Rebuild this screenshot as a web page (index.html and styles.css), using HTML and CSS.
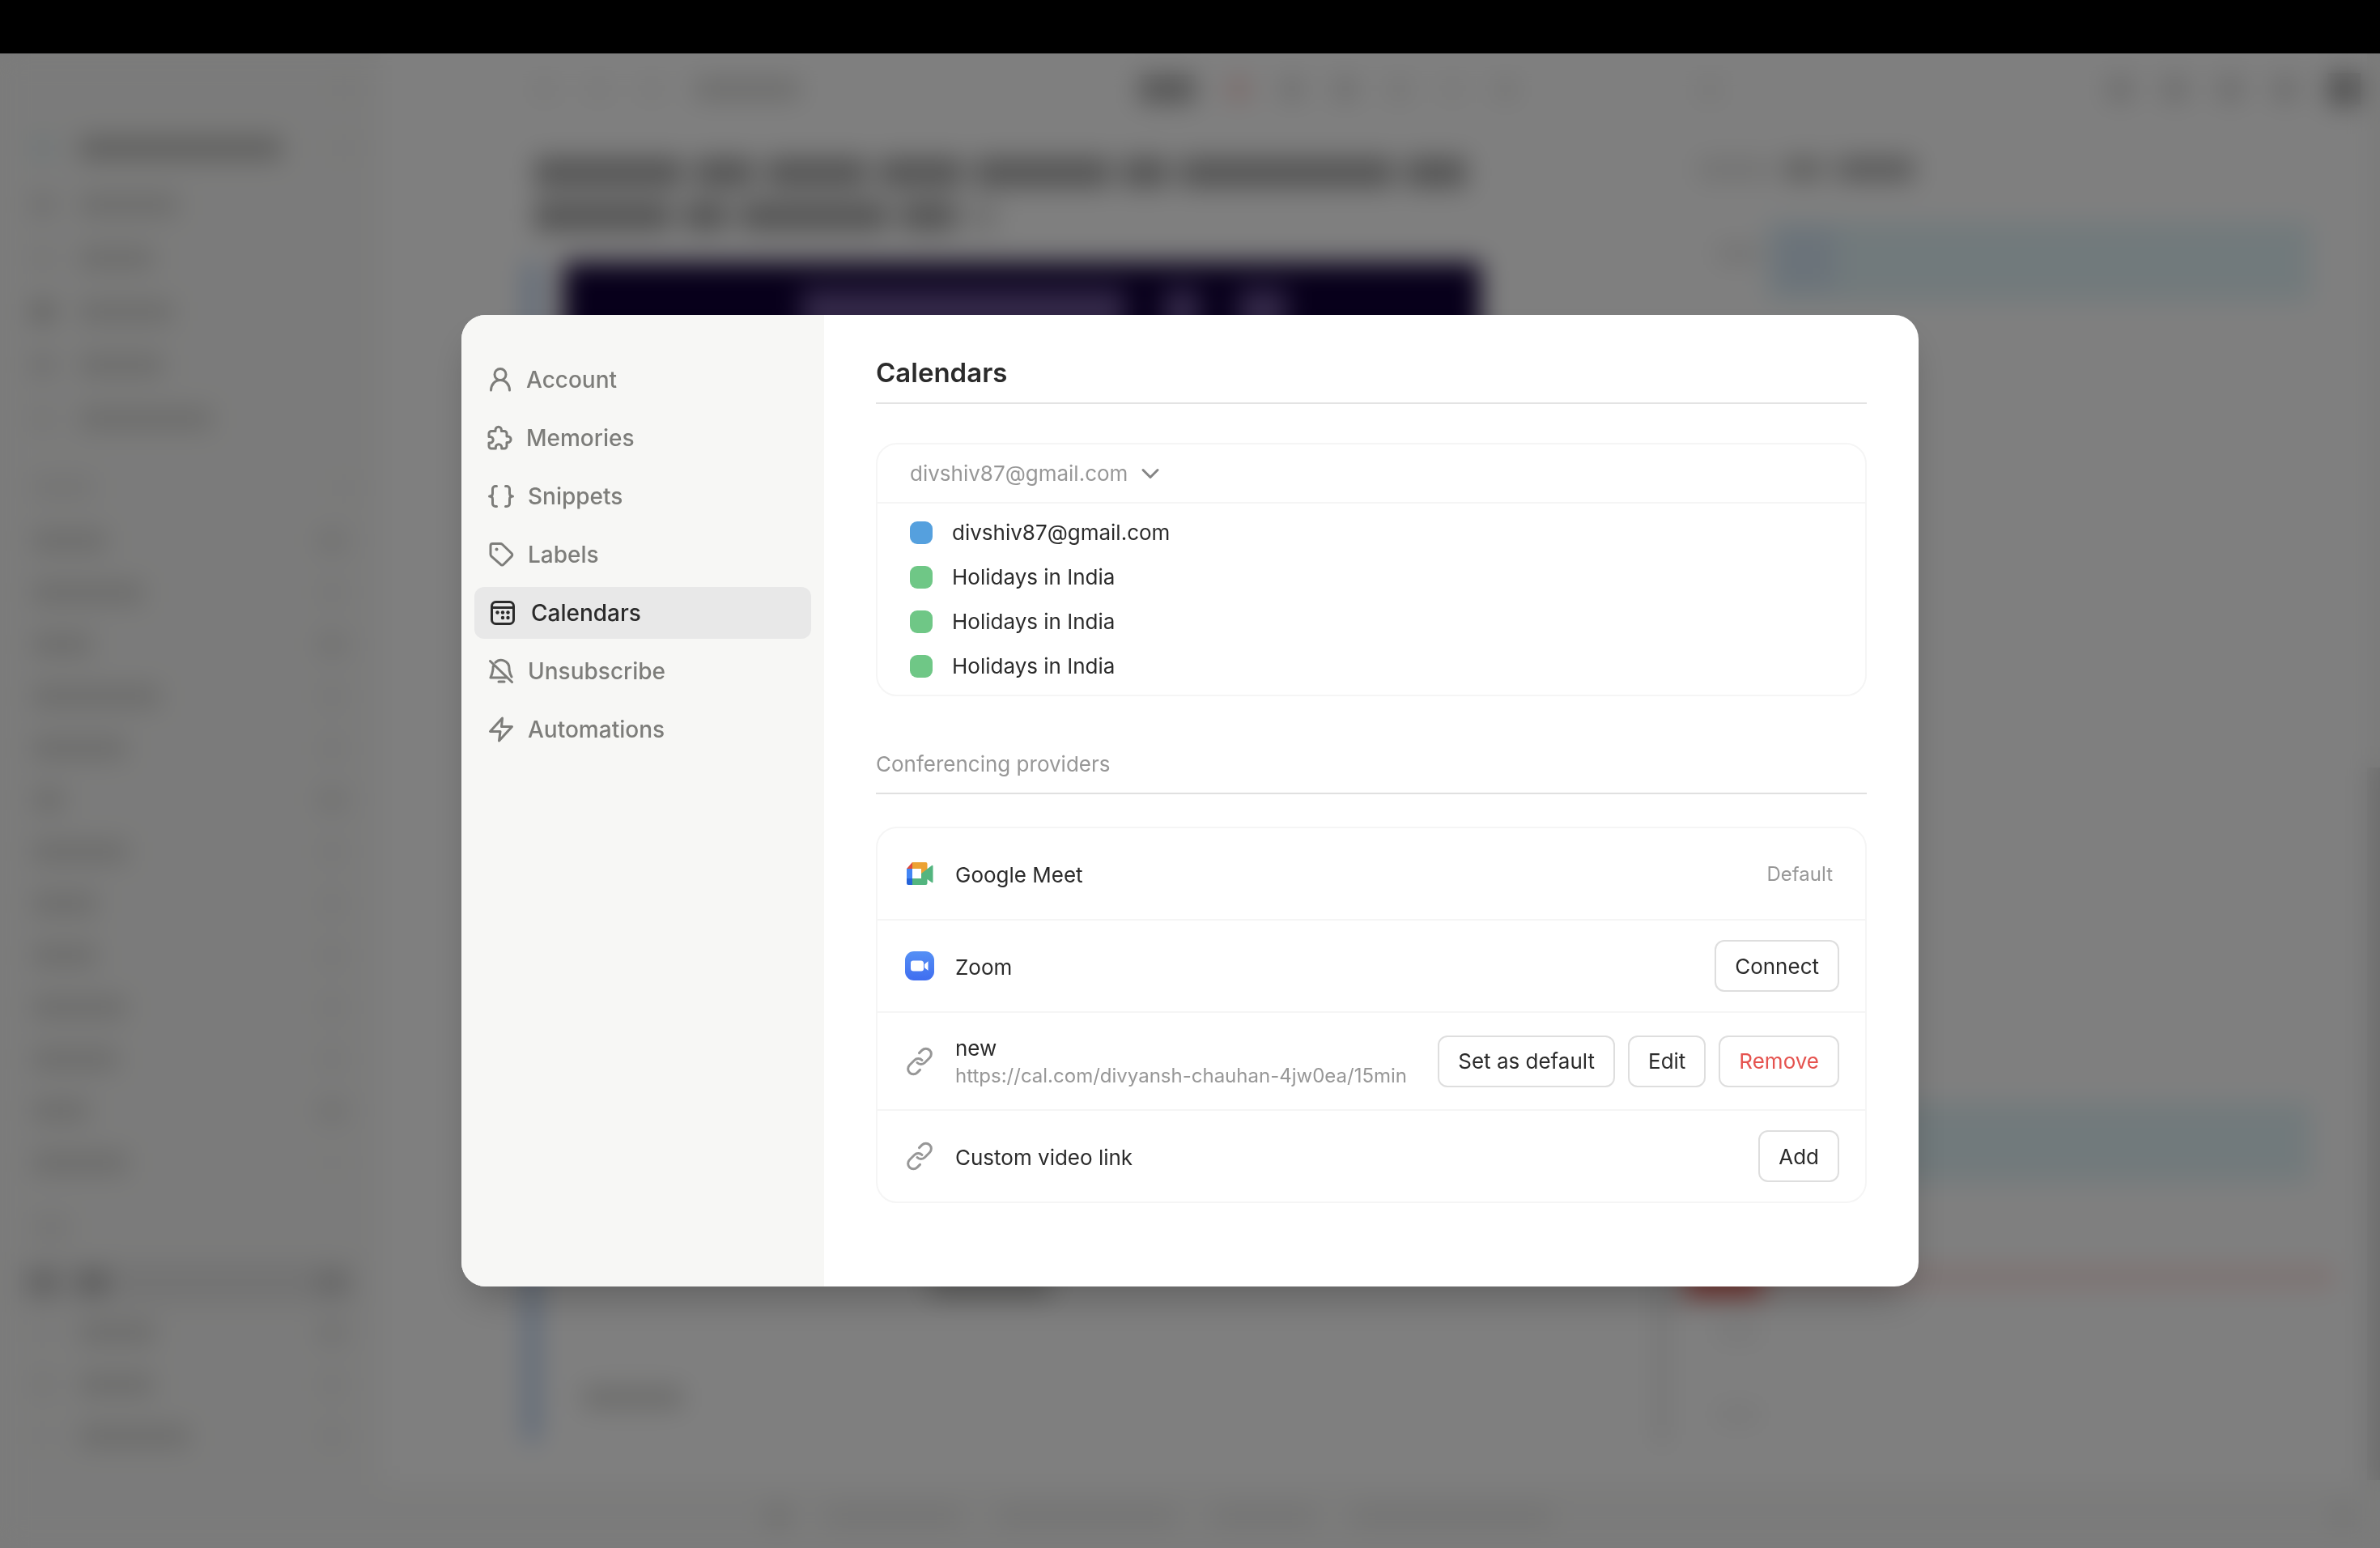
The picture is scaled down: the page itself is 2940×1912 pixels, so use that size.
FILE: index.html
```html
<!DOCTYPE html>
<html lang="en">
<head>
<meta charset="utf-8">
<meta name="viewport" content="width=device-width, initial-scale=1">
<title>Settings – Calendars</title>
<link rel="stylesheet" href="styles.css">
</head>
<body>
<div class="notch-bar"></div>
<div class="window">

  <!-- Mail app behind the dialog -->
  <div class="app" aria-hidden="true">
    <div class="rail">
      <div class="rail-top"><i class="dot ghost"></i></div>
      <div class="rail-row who"><i class="dot tint"></i><i class="bar strong" style="width:250px"></i><i class="dot ghost end"></i></div>
      <div class="rail-row"><i class="dot"></i><i class="bar" style="width:122px"></i></div>
      <div class="rail-row"><i class="dot faint"></i><i class="bar" style="width:92px"></i></div>
      <div class="rail-row"><i class="dot strong"></i><i class="bar" style="width:116px"></i></div>
      <div class="rail-row"><i class="dot"></i><i class="bar" style="width:104px"></i></div>
      <div class="rail-row"><i class="dot faint"></i><i class="bar" style="width:164px"></i></div>
      <div class="rail-head"><i class="bar faint" style="width:76px"></i><i class="dot ghost end"></i></div>
      <div class="rail-label"><i class="bar" style="width:92px"></i><i class="count two"></i></div>
      <div class="rail-label"><i class="bar" style="width:138px"></i><i class="count"></i></div>
      <div class="rail-label"><i class="bar" style="width:74px"></i><i class="count two"></i></div>
      <div class="rail-label"><i class="bar" style="width:158px"></i><i class="count"></i></div>
      <div class="rail-label"><i class="bar" style="width:116px"></i><i class="count"></i></div>
      <div class="rail-label"><i class="bar" style="width:40px"></i><i class="count two"></i></div>
      <div class="rail-label"><i class="bar" style="width:118px"></i><i class="count"></i></div>
      <div class="rail-label"><i class="bar" style="width:80px"></i><i class="count"></i></div>
      <div class="rail-label"><i class="bar" style="width:80px"></i><i class="count"></i></div>
      <div class="rail-label"><i class="bar" style="width:116px"></i><i class="count"></i></div>
      <div class="rail-label"><i class="bar" style="width:106px"></i><i class="count"></i></div>
      <div class="rail-label"><i class="bar" style="width:70px"></i><i class="count two"></i></div>
      <div class="rail-label"><i class="bar" style="width:118px"></i><i class="count faint"></i></div>
      <div class="rail-head low"><i class="bar faint" style="width:46px"></i></div>
      <div class="rail-label picked"><i class="dot strong"></i><i class="bar strong" style="width:34px"></i><i class="count two"></i></div>
      <div class="rail-label"><i class="dot ghost"></i><i class="bar" style="width:94px"></i><i class="count two"></i></div>
      <div class="rail-label"><i class="dot faint"></i><i class="bar" style="width:92px"></i><i class="count"></i></div>
      <div class="rail-label"><i class="dot ghost"></i><i class="bar" style="width:136px"></i><i class="count"></i></div>
    </div>
    <div class="desk">
      <div class="sheet">
        <div class="mail">
          <div class="mail-tools">
            <i class="dot ghost"></i><i class="dot ghost"></i><i class="dot ghost"></i><i class="bar" style="width:130px"></i>
            <i class="reply"></i><i class="dot red"></i><i class="dot"></i><i class="dot"></i><i class="dot faint"></i><i class="dot ghost"></i><i class="dot faint"></i>
          </div>
          <div class="subject">
            <i style="width:184px"></i><i style="width:74px"></i><i style="width:126px"></i><i style="width:104px"></i><i style="width:168px"></i><i style="width:58px"></i><i style="width:264px"></i><i style="width:76px"></i>
          </div>
          <div class="subject">
            <i style="width:170px"></i><i style="width:56px"></i><i style="width:184px"></i><i style="width:70px"></i><i class="emoji" style="width:36px"></i>
          </div>
          <div class="letter">
            <div class="banner"><i style="width:400px"></i><i style="width:44px"></i><i style="width:60px"></i></div>
            <div class="letter-foot"><i class="bar strong" style="width:150px"></i></div>
            <div class="letter-note"><i class="bar" style="width:124px"></i></div>
          </div>
        </div>
        <div class="agenda">
          <div class="agenda-tools"><i class="dot ghost lead"></i><i class="dot"></i><i class="dot"></i><i class="dot"></i><i class="dot"></i><i class="avatar"></i></div>
          <div class="agenda-head"><i class="bar faint" style="width:90px"></i><i class="bar strong" style="width:50px"></i><i class="bar month" style="width:96px"></i></div>
          <div class="agenda-event first"><i></i></div>
          <div class="agenda-event second"></div>
          <div class="agenda-now"></div>
          <div class="agenda-hour morning"></div>
          <div class="agenda-hour evening"></div>
          <div class="agenda-hour night"></div>
        </div>
      </div>
      <div class="hints"><i class="bar" style="width:26px"></i><i class="bar faint" style="width:166px"></i><i class="bar faint" style="width:220px"></i><i class="bar faint" style="width:126px"></i><i class="bar faint" style="width:246px"></i><i class="dot faint end"></i></div>
    </div>
    <div class="scrollbar"></div>
  </div>

  <div class="overlay">
    <section class="dialog" role="dialog" aria-modal="true" aria-labelledby="page-title">
      <nav class="menu" aria-label="Settings">
        <a class="menu-item" href="#account">
          <svg class="icon s" viewBox="0 0 32 32"><circle cx="16" cy="9.500" r="7"/><path d="M4.500 29c0-7 5-12.500 11.500-12.500S27.500 22 27.500 29"/></svg>Account</a>
        <a class="menu-item" href="#memories">
          <svg class="icon s" viewBox="0 0 32 32"><path d="M10 7.500V6a3.700 3.700 0 0 1 7.400 0v1.500H21a3 3 0 0 1 3 3V14h1.400a3.700 3.700 0 0 1 0 7.400H24V26a3 3 0 0 1-3 3h-3.300v-1.600a3.700 3.700 0 0 0-7.400 0V29H5a3 3 0 0 1-3-3v-4h1.500a3.700 3.700 0 0 0 0-7.400H2v-4.100a3 3 0 0 1 3-3z"/></svg>Memories</a>
        <a class="menu-item" href="#snippets">
          <svg class="icon m" viewBox="0 0 34 34"><path d="M11.500 4.500H10a3.500 3.500 0 0 0-3.500 3.500v5.500c0 2-1.500 3.500-4 3.500 2.500 0 4 1.500 4 3.500V26a3.500 3.500 0 0 0 3.500 3.500h1.500M22.500 4.500H24a3.500 3.500 0 0 1 3.500 3.500v5.500c0 2 1.500 3.500 4 3.500-2.500 0-4 1.500-4 3.500V26a3.500 3.500 0 0 1-3.500 3.500h-1.500"/></svg>Snippets</a>
        <a class="menu-item" href="#labels">
          <svg class="icon m" viewBox="0 0 34 34"><path d="M4 6a2.500 2.500 0 0 1 2.500-2.500H16a4 4 0 0 1 2.600 1L30 15.500a2.500 2.500 0 0 1 0 3.600L20 29.200a2.500 2.500 0 0 1-3.600 0L5 19.200a3.500 3.500 0 0 1-1-2.400z"/><circle class="solid" cx="11.500" cy="10.500" r="2"/></svg>Labels</a>
        <a class="menu-item current" href="#calendars" aria-current="page">
          <svg class="icon l" viewBox="0 0 38 38"><rect x="5.500" y="5.500" width="27" height="27" rx="5"/><path d="M5.500 12.500h27"/><g class="solid"><circle cx="12.500" cy="18.500" r="2.200"/><circle cx="19" cy="18.500" r="2.200"/><circle cx="25.500" cy="18.500" r="2.200"/><circle cx="19" cy="25" r="2.200"/><circle cx="25.500" cy="25" r="2.200"/></g></svg>Calendars</a>
        <a class="menu-item" href="#unsubscribe">
          <svg class="icon m" viewBox="0 0 34 34"><path d="M3.500 4.500l27 26M10 6.200A10 10 0 0 1 27 13c0 6 1.500 8.500 3 11M7.200 11C7 17 6.500 20 4 25h20M14 30h7"/></svg>Unsubscribe</a>
        <a class="menu-item" href="#automations">
          <svg class="icon m" viewBox="0 0 34 34"><path d="M18.500 3L3.500 19.500H16L14.500 31l16-17.500H17.500z"/></svg>Automations</a>
      </nav>

      <main class="panel">
        <h1 class="title" id="page-title">Calendars</h1>

        <div class="card">
          <button class="account" type="button" aria-expanded="true">divshiv87@gmail.com
            <svg class="chevron" viewBox="0 0 24 24"><path d="M3 7.500l9 9 9-9"/></svg>
          </button>
          <ul class="calendars">
            <li><label class="calendar"><input class="swatch blue" type="checkbox" checked>divshiv87@gmail.com</label></li>
            <li><label class="calendar"><input class="swatch" type="checkbox" checked>Holidays in India</label></li>
            <li><label class="calendar"><input class="swatch" type="checkbox" checked>Holidays in India</label></li>
            <li><label class="calendar"><input class="swatch" type="checkbox" checked>Holidays in India</label></li>
          </ul>
        </div>

        <h2 class="subtitle">Conferencing providers</h2>

        <ul class="card providers">
          <li class="provider">
            <svg class="logo" viewBox="0 0 36 36"><path fill="#dc4b3e" d="M9 4v8H2z"/><path fill="#eca233" d="M9 4h16.500a2 2 0 0 1 2 2v7L20 19v-7H9z"/><path fill="#4285f4" d="M2 12h7v12H2z"/><path fill="#2563d9" d="M2 24h7v8H4a2 2 0 0 1-2-2z"/><path fill="#53b57f" d="M9 24h11v-6l13-10q1.500-1 1.500 1v19q0 2-1.500 1l-5.500-4v5a2 2 0 0 1-2 2H9z"/></svg>
            <div class="name">Google Meet</div>
            <span class="badge">Default</span>
          </li>
          <li class="provider">
            <svg class="logo" viewBox="0 0 36 36"><defs><linearGradient id="zoom-fill" x1="0" y1="0" x2="0" y2="1"><stop offset="0" stop-color="#5590f5"/><stop offset="1" stop-color="#3f6df0"/></linearGradient></defs><rect width="36" height="36" rx="11" fill="url(#zoom-fill)"/><path fill="#fff" d="M10 11.500h9.500a3.500 3.500 0 0 1 3.500 3.500v6.500a3 3 0 0 1-3 3h-9.500a3.500 3.500 0 0 1-3.500-3.500v-6.500a3 3 0 0 1 3-3zM24 16l4.500-3.700v11.500L24 20.300z"/></svg>
            <div class="name">Zoom</div>
            <button class="btn" type="button">Connect</button>
          </li>
          <li class="provider">
            <svg class="logo link" viewBox="0 0 36 36"><path d="M15 19.500a6.500 6.500 0 0 0 9.400 0l6-6a6.600 6.600 0 0 0-9.400-9.400l-3.500 3.500M21 16.500a6.500 6.500 0 0 0-9.400 0l-6 6A6.600 6.600 0 0 0 15 31.900l3.500-3.500"/></svg>
            <div class="name">new<span class="url">https://cal.com/divyansh-chauhan-4jw0ea/15min</span></div>
            <button class="btn" type="button">Set as default</button>
            <button class="btn" type="button">Edit</button>
            <button class="btn danger" type="button">Remove</button>
          </li>
          <li class="provider">
            <svg class="logo link" viewBox="0 0 36 36"><path d="M15 19.500a6.500 6.500 0 0 0 9.400 0l6-6a6.600 6.600 0 0 0-9.400-9.400l-3.500 3.500M21 16.500a6.500 6.500 0 0 0-9.400 0l-6 6A6.600 6.600 0 0 0 15 31.900l3.500-3.500"/></svg>
            <div class="name">Custom video link</div>
            <button class="btn" type="button">Add</button>
          </li>
        </ul>
      </main>
    </section>
  </div>
</div>
</body>
</html>
```
FILE: styles.css
```css
* {
  box-sizing: border-box;
}

body {
  margin: 0;
  min-height: 100vh;
  display: flex;
  flex-direction: column;
  background: #000;
  color: #2b2b2b;
  font-family: Inter, "Liberation Sans", sans-serif;
  font-size: 26px;
}

h1, h2, ul {
  margin: 0;
  padding: 0;
  list-style: none;
}

button {
  font: inherit;
  color: inherit;
  background: none;
  cursor: pointer;
}

.notch-bar {
  height: 66px;
  background: #000;
}

.window {
  position: relative;
  flex: 1;
  display: flex;
  overflow: hidden;
  background: #f7f7f6;
}

/* App behind the dialog */
.app {
  flex: 1;
  display: flex;
}

.app i {
  display: block;
  flex: none;
}

.bar {
  height: 28px;
  background: #dadad8;
}

.dot {
  width: 26px;
  height: 26px;
  background: #d8d8d8;
}

.bar.strong, .dot.strong { background: #c0c0be; }
.bar.faint, .dot.faint { background: #e8e8e7; }
.dot.ghost { background: #f1f1f0; }
.dot.tint { background: #dcebee; }
.dot.red { background: #f4cfcc; }
.end { margin-left: auto; }

.rail {
  width: 470px;
  display: flex;
  flex-direction: column;
  padding: 0 32px 0 40px;
}

.rail-top {
  height: 84px;
  display: flex;
  align-items: center;
  justify-content: flex-end;
}

.rail-row, .rail-label, .rail-head {
  display: flex;
  align-items: center;
  gap: 32px;
  height: 66px;
}

.rail-row.who { margin-bottom: 4px; }
.rail-label { height: 64px; }
.rail-head { height: 86px; align-items: flex-end; padding-bottom: 20px; }
.rail-head.low { height: 82px; }

.rail-label.picked {
  height: 52px;
  margin: 8px 0 4px -16px;
  padding-left: 16px;
  background: #e8e8e8;
}

.rail-label.picked .bar,
.rail-label.picked .dot { background: #b4b4b4; }
.rail-label.picked .count { background: #c8c8c8; }

.count {
  width: 16px;
  height: 24px;
  margin: 0 20px 0 auto;
  background: #e2e2e1;
}

.count.two {
  width: 32px;
  margin-right: 12px;
  background: #dededd;
}

.count.faint { background: #efefee; }

.desk {
  flex: 1;
  display: flex;
  flex-direction: column;
}

.sheet {
  flex: 1;
  display: flex;
  background: #fff;
}

.mail {
  flex: 1;
  display: flex;
  flex-direction: column;
  padding: 0 246px 54px 190px;
}

.mail-tools {
  height: 88px;
  display: flex;
  align-items: center;
  gap: 40px;
  margin-right: -54px;
}

.mail-tools .bar { height: 26px; }

.reply {
  width: 70px;
  height: 34px;
  margin-left: auto;
  background: #acacac;
}

.subject {
  display: flex;
  align-items: center;
  gap: 14px;
  height: 54px;
}

.mail-tools + .subject { margin-top: 32px; }

.subject i {
  height: 38px;
  background: #acacac;
}

.subject .emoji { background: #e0e0e0; }

.letter {
  flex: 1;
  display: flex;
  flex-direction: column;
  margin: 30px -10px 0 -10px;
  padding-left: 32px;
  border-left: 14px solid #a0c0ec;
}

.banner {
  height: 600px;
  display: flex;
  gap: 48px;
  padding: 32px 0 0 294px;
  background: #100036;
}

.banner i {
  height: 60px;
  background: #665090;
}

.letter-foot {
  flex: 1;
  display: flex;
  align-items: flex-end;
  justify-content: center;
  padding-right: 80px;
}

.letter-note {
  height: 180px;
  display: flex;
  align-items: center;
  padding: 72px 24px 0;
}

.agenda {
  flex: 0 0 35%;
  position: relative;
  display: flex;
  flex-direction: column;
  padding: 0 8px 0 32px;
}

.agenda::before {
  content: "";
  position: absolute;
  left: -18px;
  bottom: 50px;
  width: 12px;
  height: 400px;
  background: #e4e4e4;
}

.agenda-tools {
  height: 88px;
  display: flex;
  align-items: center;
  gap: 38px;
}

.agenda-tools .lead { margin-right: auto; }
.agenda-tools .dot { width: 30px; height: 30px; }

.avatar {
  width: 40px;
  height: 40px;
  background: #a0a0a0;
}

.agenda-head {
  height: 110px;
  display: flex;
  align-items: center;
  gap: 16px;
}

.month {
  height: 30px;
  background: #b6b6b6;
}

/* Events and the current time sit on the day grid */
.agenda-event {
  position: absolute;
  left: 118px;
  right: 70px;
  top: 208px;
  height: 98px;
  padding: 8px;
  background: #e3f4f8;
}

.agenda-event i {
  width: 76px;
  height: 76px;
  background: #d6e6f4;
}

.agenda-event.second { top: 1296px; }

.agenda-now {
  position: absolute;
  left: 16px;
  right: 40px;
  top: 1498px;
  height: 26px;
  background: #fce4e2;
}

.agenda-now::before {
  content: "";
  display: block;
  width: 96px;
  height: 36px;
  background: #f0645c;
}

.agenda-hour {
  position: absolute;
  left: 56px;
  width: 52px;
  height: 22px;
  background: #f0f0f0;
}

.agenda-hour.morning { top: 236px; background: #e6e6e6; }
.agenda-hour.evening { top: 1568px; }
.agenda-hour.night { top: 1670px; }

.hints {
  height: 78px;
  display: flex;
  align-items: center;
  gap: 46px;
  padding: 0 16px 0 478px;
}

.hints .bar { height: 24px; }

.scrollbar {
  align-self: flex-end;
  width: 16px;
  height: 880px;
  margin: 0 0 84px;
  background: #dadada;
}

/* Dialog */
.overlay {
  position: absolute;
  inset: 0;
  display: flex;
  align-items: center;
  justify-content: center;
  background: rgba(0, 0, 0, .5);
  backdrop-filter: blur(16px);
}

.dialog {
  width: min(1800px, 92%);
  display: flex;
  overflow: hidden;
  border-radius: 30px;
  background: #fff;
  box-shadow: 0 24px 48px -12px rgba(0, 0, 0, .25);
}

.menu {
  width: 448px;
  display: flex;
  flex-direction: column;
  gap: 8px;
  padding: 48px 16px;
  background: #f7f7f5;
}

.menu-item {
  display: flex;
  align-items: center;
  gap: 16px;
  height: 64px;
  padding: 0 16px;
  border-radius: 12px;
  color: #7d7d7a;
  font-size: 28px;
  font-weight: 500;
  text-decoration: none;
}

.menu-item.current {
  background: #e8e8e8;
  color: #2b2b2b;
}

.icon, .chevron, .link {
  flex: none;
  fill: none;
  stroke: currentColor;
  stroke-width: 3;
  stroke-linecap: round;
  stroke-linejoin: round;
}

.icon.s { width: 32px; height: 32px; }
.icon.m { width: 34px; height: 34px; }
.icon.l { width: 38px; height: 38px; }
.solid { fill: currentColor; stroke: none; }

.panel {
  flex: 1;
  padding: 51px 64px 103px;
}

.title {
  padding-bottom: 17px;
  border-bottom: 2px solid #e3e3e3;
  font-size: 33px;
  font-weight: 600;
  line-height: 40px;
}

.subtitle {
  margin-top: 64px;
  padding-bottom: 16px;
  border-bottom: 2px solid #e0e0e0;
  color: #979797;
  font-size: 26px;
  font-weight: 400;
  line-height: 39px;
}

.card {
  margin-top: 48px;
  border: 2px solid #f5f5f5;
  border-radius: 26px;
}

.account {
  display: flex;
  align-items: center;
  gap: 16px;
  width: 100%;
  padding: 16px 40px;
  border: 0;
  border-bottom: 2px solid #f5f5f5;
  color: #979797;
  line-height: 39px;
}

.chevron {
  width: 24px;
  height: 24px;
  color: #858585;
}

.calendars {
  display: grid;
  gap: 16px;
  padding: 16px 40px;
}

.calendar {
  display: flex;
  align-items: center;
  gap: 24px;
  line-height: 39px;
}

.swatch {
  appearance: none;
  width: 28px;
  height: 28px;
  margin: 0;
  border-radius: 9px;
  background: #6fc786;
}

.swatch.blue { background: #55a0de; }

.providers { margin-top: 40px; }

.provider {
  display: flex;
  align-items: center;
  gap: 16px;
  min-height: 112px;
  padding: 24px 32px;
}

.provider + .provider {
  border-top: 2px solid #f5f5f5;
  min-height: 114px;
}

.logo {
  flex: none;
  width: 36px;
  height: 36px;
  margin: 0 10px 0 2px;
}

.link { color: #979797; }

.name {
  flex: 1;
  padding-top: 2px;
  line-height: 35px;
}

.url {
  display: block;
  color: #979797;
  font-size: 24px;
  line-height: 34px;
}

.badge {
  padding-right: 8px;
  color: #979797;
  font-size: 24px;
}

.btn {
  height: 64px;
  padding: 0 23px;
  border: 2px solid #dedede;
  border-radius: 12px;
}

.btn.danger { color: #e5534f; }
```
